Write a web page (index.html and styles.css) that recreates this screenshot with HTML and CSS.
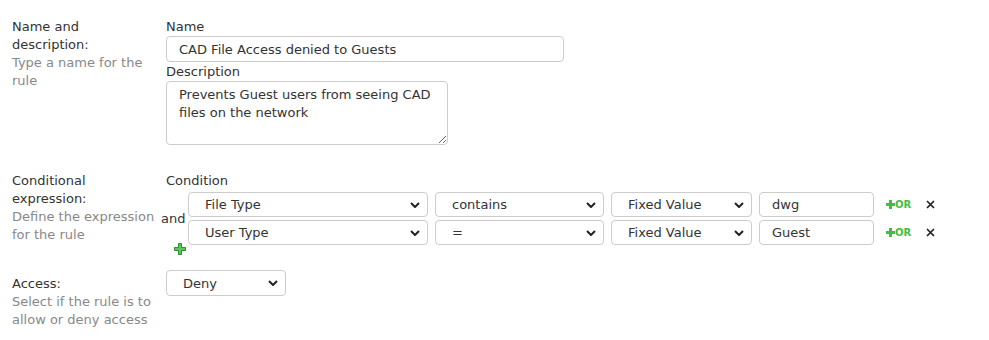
FILE: index.html
```html
<!DOCTYPE html>
<html lang="en">
<head>
    <meta charset="UTF-8">
    <title>Edit Rule</title>
    <link rel="stylesheet" href="styles.css">
</head>
<body>
    <div class="rule-form">
        <div class="rule-row rule-row--name">
            <div class="rule-label">
                <div class="rule-label__title">Name and description:</div>
                <div class="rule-label__hint">Type a name for the rule</div>
            </div>
            <div class="rule-body">
                <div class="field-label">Name</div>
                <input type="text" class="text-input text-input--name" value="CAD File Access denied to Guests">
                <div class="field-label">Description</div>
                <textarea class="text-area">Prevents Guest users from seeing CAD files on the network</textarea>
            </div>
        </div>

        <div class="rule-row rule-row--cond">
            <div class="rule-label">
                <div class="rule-label__title">Conditional expression:</div>
                <div class="rule-label__hint">Define the expression for the rule</div>
            </div>
            <div class="rule-body">
                <div class="field-label">Condition</div>
                <div class="cond-table">
                    <div class="cond-and">and</div>
                    <div class="cond-line">
                        <select class="select select--field"><option>File Type</option></select>
                        <select class="select select--op"><option>contains</option></select>
                        <select class="select select--kind"><option>Fixed Value</option></select>
                        <input type="text" class="text-input text-input--value" value="dwg">
                        <a class="add-or" href="#">
                            <svg width="9" height="9" viewBox="0 0 9 9"><path d="M3 0h3v3h3v3H6v3H3V6H0V3h3z" fill="#3fbf3f"/></svg>OR
                        </a>
                        <a class="remove" href="#">
                            <svg width="9" height="9" viewBox="0 0 9 9"><path d="M1 1l7 7M8 1L1 8" stroke="#222" stroke-width="1.7"/></svg>
                        </a>
                    </div>
                    <div class="cond-line">
                        <select class="select select--field"><option>User Type</option></select>
                        <select class="select select--op"><option>=</option></select>
                        <select class="select select--kind"><option>Fixed Value</option></select>
                        <input type="text" class="text-input text-input--value" value="Guest">
                        <a class="add-or" href="#">
                            <svg width="9" height="9" viewBox="0 0 9 9"><path d="M3 0h3v3h3v3H6v3H3V6H0V3h3z" fill="#3fbf3f"/></svg>OR
                        </a>
                        <a class="remove" href="#">
                            <svg width="9" height="9" viewBox="0 0 9 9"><path d="M1 1l7 7M8 1L1 8" stroke="#222" stroke-width="1.7"/></svg>
                        </a>
                    </div>
                    <a class="cond-add" href="#">
                        <svg width="12" height="12" viewBox="0 0 12 12"><path d="M4.5 .5h3v4h4v3h-4v4h-3v-4h-4v-3h4z" fill="#5cc85c" stroke="#2e8b2e" stroke-width="1"/></svg>
                    </a>
                </div>
            </div>
        </div>

        <div class="rule-row rule-row--access">
            <div class="rule-label rule-label--access">
                <div class="rule-label__title">Access:</div>
                <div class="rule-label__hint">Select if the rule is to allow or deny access</div>
            </div>
            <div class="rule-body">
                <select class="select select--access"><option>Deny</option><option>Allow</option></select>
            </div>
        </div>
    </div>
</body>
</html>
```

FILE: styles.css
```css
* {
    box-sizing: border-box;
}
html, body {
    margin: 0;
    padding: 0;
    background: #fff;
}
body {
    font-family: "DejaVu Sans", Verdana, sans-serif;
    font-size: 13px;
    line-height: 18px;
    color: #333;
}
.rule-form {
    padding: 18px 0 0 12px;
}
.rule-row {
    display: flex;
    align-items: flex-start;
}
.rule-row--cond {
    margin-top: 27px;
}
.rule-row--access {
    margin-top: 15px;
}
.rule-label {
    width: 149px;
    padding-right: 5px;
    flex: none;
}
.rule-label--access {
    padding-top: 5px;
}
.rule-label__hint {
    color: #888;
}
.rule-body {
    padding-left: 5px;
}
.field-label {
    height: 18px;
}
.text-input,
.text-area,
.select {
    font-family: inherit;
    font-size: 13px;
    color: #333;
    border: 1px solid #ccc;
    border-radius: 4px;
    background: #fff;
    outline: none;
}
.text-input {
    height: 26px;
    padding: 0 12px;
}
.text-input--name {
    display: block;
    width: 398px;
    margin-bottom: 1px;
}
.text-area {
    display: block;
    width: 282px;
    height: 64px;
    padding: 4px 12px;
    line-height: 18px;
    resize: vertical;
}
.select {
    -webkit-appearance: none;
    appearance: none;
    height: 25px;
    padding: 0 24px 0 16px;
    background-image: url("data:image/svg+xml,%3Csvg xmlns='http://www.w3.org/2000/svg' width='10' height='6' viewBox='0 0 10 6'%3E%3Cpath d='M1 1l4 4 4-4' fill='none' stroke='%23222' stroke-width='2'/%3E%3C/svg%3E");
    background-repeat: no-repeat;
    background-position: right 7px center;
}
.cond-table {
    display: grid;
    grid-template-columns: 27px auto;
    grid-template-rows: 25px 25px auto;
    row-gap: 3px;
    margin-left: -5px;
    margin-top: 2px;
}
.cond-and {
    grid-column: 1;
    grid-row: 1 / 3;
    align-self: center;
}
.cond-line {
    grid-column: 2;
    display: flex;
    align-items: center;
    gap: 7px;
}
.cond-line .text-input--value {
    height: 25px;
}
.select--field {
    width: 240px;
}
.select--op {
    width: 169px;
}
.select--kind {
    width: 141px;
}
.text-input--value {
    width: 115px;
}
.add-or {
    display: flex;
    align-items: center;
    margin-left: 5px;
    color: #3fbf3f;
    font-size: 10px;
    font-weight: bold;
    text-decoration: none;
}
.remove {
    display: flex;
    margin-left: 8px;
}
.cond-add {
    grid-column: 1;
    grid-row: 3;
    display: block;
    width: 12px;
    height: 12px;
    margin: -5px 0 0 13px;
    line-height: 0;
}
.select--access {
    width: 120px;
    height: 26px;
}
```
